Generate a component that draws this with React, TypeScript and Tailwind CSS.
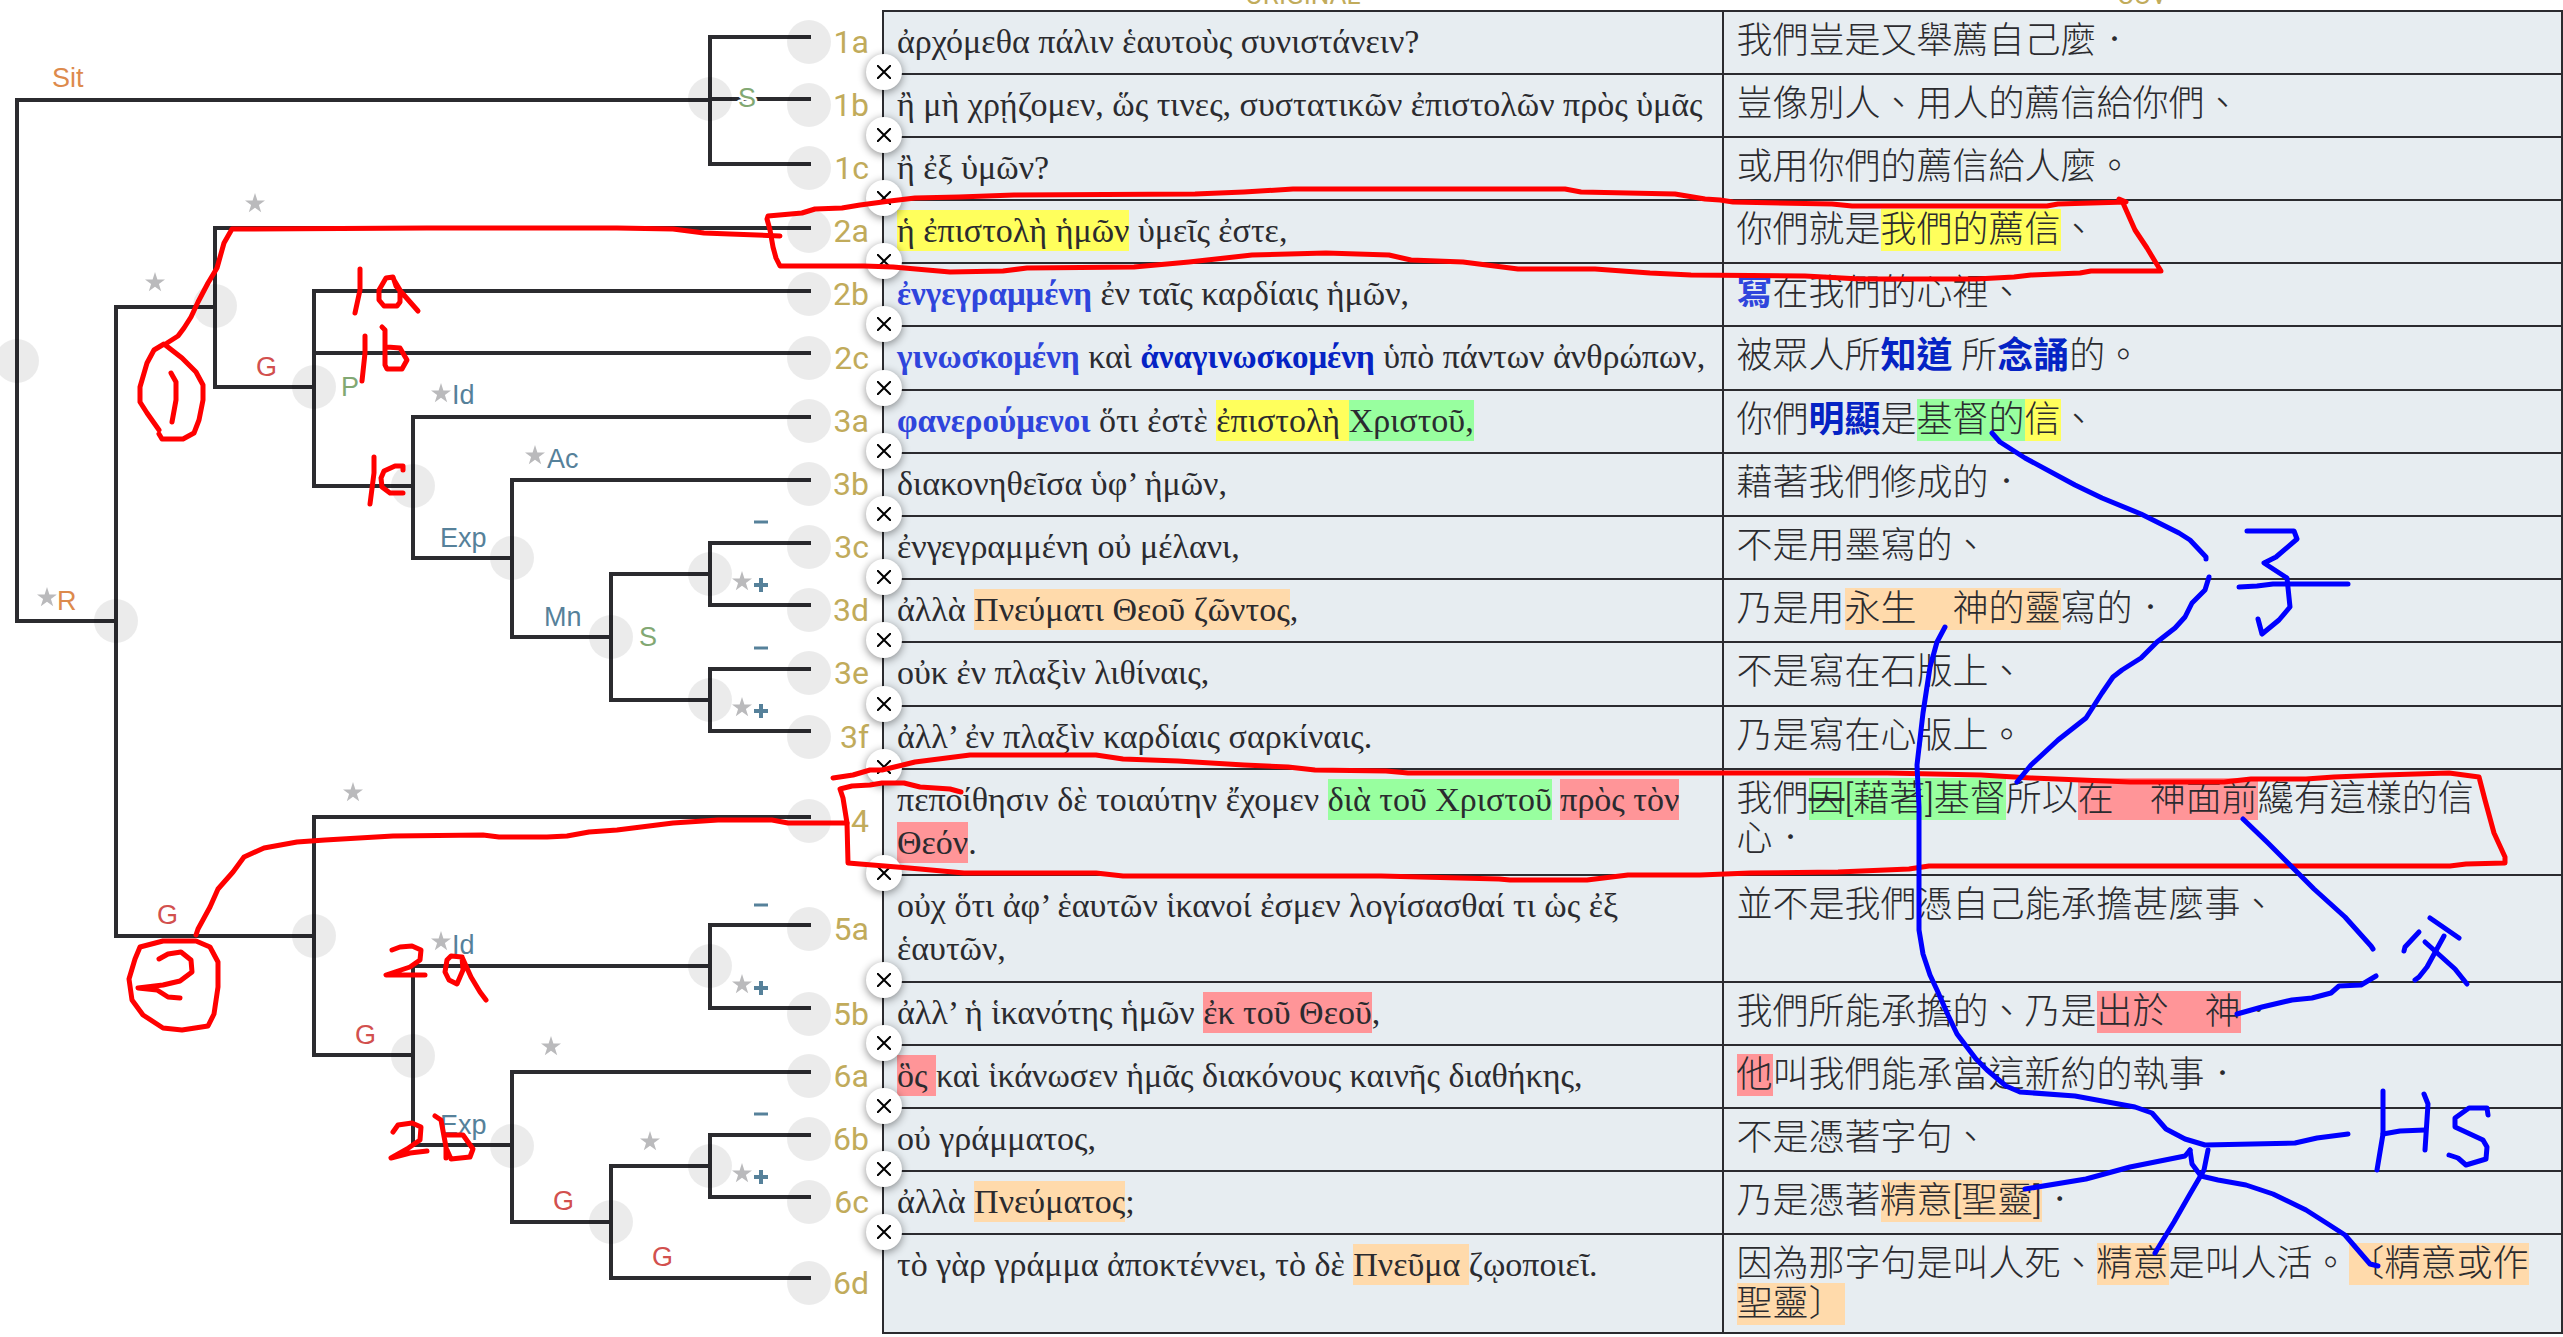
import { Fragment, type ReactNode } from "react";
import clsx from "clsx";

type Tone = "yellow" | "green" | "red" | "orange";

const toneClass: Record<Tone, string> = {
  yellow: "bg-[#ffff5c]",
  green: "bg-[#98ff9f]",
  red: "bg-[#ff9598]",
  orange: "bg-[#ffdaab]",
};

function H({ tone, children }: { tone: Tone; children: ReactNode }) {
  return <mark className={clsx("text-inherit", toneClass[tone])}>{children}</mark>;
}

function B({ deep, children }: { deep?: boolean; children: ReactNode }) {
  return <strong className={clsx("font-bold", deep ? "text-[#0523c4]" : "text-[#2f45dc]")}>{children}</strong>;
}

type Row = { id: string; greek: ReactNode; chinese: ReactNode; height?: string };

const rows: Row[] = [
  { id: "1a", greek: "ἀρχόμεθα πάλιν ἑαυτοὺς συνιστάνειν?", chinese: "我們豈是又舉薦自己麼．" },
  { id: "1b", greek: "ἢ μὴ χρῄζομεν, ὥς τινες, συστατικῶν ἐπιστολῶν πρὸς ὑμᾶς", chinese: "豈像別人、用人的薦信給你們、" },
  { id: "1c", greek: "ἢ ἐξ ὑμῶν?", chinese: "或用你們的薦信給人麼。" },
  {
    id: "2a",
    greek: <><H tone="yellow">ἡ ἐπιστολὴ ἡμῶν</H> ὑμεῖς ἐστε,</>,
    chinese: <>你們就是<H tone="yellow">我們的薦信</H>、</>,
  },
  { id: "2b", greek: <><B>ἐνγεγραμμένη</B> ἐν ταῖς καρδίαις ἡμῶν,</>, chinese: <><B>寫</B>在我們的心裡、</> },
  {
    id: "2c",
    greek: <><B>γινωσκομένη</B> καὶ <B deep>ἀναγινωσκομένη</B> ὑπὸ πάντων ἀνθρώπων,</>,
    chinese: <>被眾人所<B deep>知道</B> 所<B deep>念誦</B>的。</>,
    height: "h-16",
  },
  {
    id: "3a",
    greek: <><B>φανερούμενοι</B> ὅτι ἐστὲ <H tone="yellow">ἐπιστολὴ </H><H tone="green">Χριστοῦ,</H></>,
    chinese: <>你們<B deep>明顯</B>是<H tone="green">基督的</H><H tone="yellow">信</H>、</>,
  },
  { id: "3b", greek: "διακονηθεῖσα ὑφ’ ἡμῶν,", chinese: "藉著我們修成的．" },
  { id: "3c", greek: "ἐνγεγραμμένη οὐ μέλανι,", chinese: "不是用墨寫的、" },
  {
    id: "3d",
    greek: <>ἀλλὰ <H tone="orange">Πνεύματι Θεοῦ ζῶντος</H>,</>,
    chinese: <>乃是用<H tone="orange">永生　神的靈</H>寫的．</>,
  },
  { id: "3e", greek: "οὐκ ἐν πλαξὶν λιθίναις,", chinese: "不是寫在石版上、", height: "h-16" },
  { id: "3f", greek: "ἀλλ’ ἐν πλαξὶν καρδίαις σαρκίναις.", chinese: "乃是寫在心版上。" },
  {
    id: "4",
    greek: <>πεποίθησιν δὲ τοιαύτην ἔχομεν <H tone="green">διὰ τοῦ Χριστοῦ</H> <H tone="red">πρὸς τὸν Θεόν</H>.</>,
    chinese: <>我們<H tone="green"><s>因</s>[藉著]基督</H>所以<H tone="red">在　神面前</H>纔有這樣的信心．</>,
  },
  {
    id: "5a",
    greek: "οὐχ ὅτι ἀφ’ ἑαυτῶν ἱκανοί ἐσμεν λογίσασθαί τι ὡς ἐξ ἑαυτῶν,",
    chinese: "並不是我們憑自己能承擔甚麼事、",
    height: "h-[107px]",
  },
  {
    id: "5b",
    greek: <>ἀλλ’ ἡ ἱκανότης ἡμῶν <H tone="red">ἐκ τοῦ Θεοῦ</H>,</>,
    chinese: <>我們所能承擔的、乃是<H tone="red">出於　神</H>．</>,
  },
  {
    id: "6a",
    greek: <><H tone="red">ὃς </H>καὶ ἱκάνωσεν ἡμᾶς διακόνους καινῆς διαθήκης,</>,
    chinese: <><H tone="red">他</H>叫我們能承當這新約的執事．</>,
  },
  { id: "6b", greek: "οὐ γράμματος,", chinese: "不是憑著字句、" },
  {
    id: "6c",
    greek: <>ἀλλὰ <H tone="orange">Πνεύματος</H>;</>,
    chinese: <>乃是憑著<H tone="orange">精意[聖靈]</H>．</>,
  },
  {
    id: "6d",
    greek: <>τὸ γὰρ γράμμα ἀποκτέννει, τὸ δὲ <H tone="orange">Πνεῦμα </H>ζῳοποιεῖ.</>,
    chinese: <>因為那字句是叫人死、<H tone="orange">精意</H>是叫人活。<H tone="orange">〔精意或作聖靈〕</H></>,
  },
];

/* Tree geometry: verticals are [x, y1, y2], horizontals are [x1, x2, y]. */
const verticals = [
  [17, 100, 621], [116, 307, 936], [215, 228, 387], [314, 291, 486], [314, 817, 1055],
  [413, 417, 558], [413, 966, 1145], [512, 480, 637], [512, 1072, 1222], [611, 574, 700],
  [611, 1166, 1278], [710, 37, 164], [710, 543, 605], [710, 669, 731], [710, 925, 1008], [710, 1135, 1197],
];
const horizontals = [
  [17, 710, 100], [17, 116, 621], [116, 215, 307], [116, 314, 936], [215, 314, 387], [314, 413, 486],
  [314, 413, 1055], [413, 512, 558], [413, 710, 966], [413, 512, 1145], [512, 611, 637], [512, 611, 1222],
  [611, 710, 574], [611, 710, 700], [611, 710, 1166],
];
const joints = [
  [17, 361], [116, 621], [215, 306], [314, 387], [314, 936], [413, 486], [413, 1056], [512, 558], [512, 1146],
  [611, 637], [611, 1222], [710, 99], [710, 574], [710, 700], [710, 966], [710, 1166],
];
/* [label, x where the branch starts, branch y, node y] */
const leaves: [string, number, number, number][] = [
  ["1a", 710, 37, 42], ["1b", 710, 99, 105], ["1c", 710, 164, 168], ["2a", 215, 228, 231], ["2b", 314, 291, 294],
  ["2c", 314, 353, 358], ["3a", 413, 417, 421], ["3b", 512, 480, 484], ["3c", 710, 543, 547], ["3d", 710, 605, 610],
  ["3e", 710, 669, 673], ["3f", 710, 731, 737], ["4", 314, 817, 821], ["5a", 710, 925, 929], ["5b", 710, 1008, 1014],
  ["6a", 512, 1072, 1076], ["6b", 710, 1135, 1139], ["6c", 710, 1197, 1202], ["6d", 611, 1278, 1283],
];
const stars = [
  [255, 203], [155, 282], [441, 393], [535, 455], [47, 597], [742, 581], [742, 707], [353, 792],
  [441, 941], [742, 984], [551, 1046], [650, 1141], [742, 1173],
];
const tags: [string, number, number, string][] = [
  ["Sit", 52, 87, "fill-[#dd8a4c]"], ["R", 57, 610, "fill-[#dd8a4c]"],
  ["G", 256, 376, "fill-[#d2504e]"], ["G", 157, 924, "fill-[#d2504e]"], ["G", 355, 1044, "fill-[#d2504e]"],
  ["G", 553, 1210, "fill-[#d2504e]"], ["G", 652, 1266, "fill-[#d2504e]"],
  ["P", 341, 396, "fill-[#82a873]"], ["S", 738, 107, "fill-[#82a873]"], ["S", 639, 646, "fill-[#82a873]"],
  ["Id", 452, 404, "fill-[#56819a]"], ["Ac", 547, 468, "fill-[#56819a]"], ["Exp", 440, 547, "fill-[#56819a]"],
  ["Mn", 544, 626, "fill-[#56819a]"], ["Id", 452, 954, "fill-[#56819a]"], ["Exp", 440, 1134, "fill-[#56819a]"],
];
const minuses = [522, 648, 905, 1114];
const pluses = [585, 711, 988, 1177];

function Tree() {
  return (
    <svg className="h-[1337px] w-[882px] shrink-0" viewBox="0 0 882 1337" role="img" aria-label="Discourse tree">
      <g className="fill-none stroke-[#2b2b2f] stroke-4" strokeLinecap="square">
        {verticals.map(([x, a, b]) => <path key={`${x}-${a}`} d={`M${x} ${a}V${b}`} />)}
        {horizontals.map(([a, b, y]) => <path key={`${a}-${y}`} d={`M${a} ${y}H${b}`} />)}
        {leaves.map(([id, x, y]) => <path key={id} d={`M${x} ${y}H809`} />)}
      </g>
      <g className="fill-black/8">
        {joints.map(([x, y]) => <circle key={`${x}-${y}`} cx={x} cy={y} r="22" />)}
        {leaves.map(([id, , , y]) => <circle key={id} cx="809" cy={y} r="22" />)}
      </g>
      <g className="fill-[#bababc]">
        {stars.map(([x, y]) => (
          <path
            key={`${x}-${y}`}
            transform={`translate(${x} ${y})`}
            d="M0-10 2.4-2.6H10L3.9 1.9 6.2 9.2 0 4.8-6.2 9.2-3.9 1.9-10-2.6H-2.4Z"
          />
        ))}
      </g>
      <g
        className="stroke-white stroke-[5] font-['Liberation_Sans',sans-serif] text-[27px] [paint-order:stroke]"
        strokeLinejoin="round"
      >
        {tags.map(([t, x, y, c]) => (
          <text key={`${t}-${x}-${y}`} x={x} y={y} className={c}>{t}</text>
        ))}
      </g>
      <g className="fill-none stroke-[#56819a] stroke-3">
        {minuses.map((y) => <path key={y} d={`M754 ${y}H768`} />)}
        {pluses.map((y) => <path key={y} className="stroke-4" d={`M754 ${y}H768M761 ${y - 7}V${y + 7}`} />)}
      </g>
      <g className="fill-[#c1ab5b] text-[32px]" textAnchor="end">
        {leaves.map(([id, , , y]) => <text key={id} x="869" y={y + 11}>{id}</text>)}
      </g>
    </svg>
  );
}

function CloseButton({ id }: { id: string }) {
  return (
    <button
      type="button"
      aria-label={`Split after ${id}`}
      className="absolute -bottom-[17px] -left-[18px] z-10 flex size-9 items-center justify-center rounded-full bg-white shadow-[0_2px_8px_rgba(0,0,0,0.45)]"
    >
      <svg viewBox="0 0 14 14" className="size-[14px] fill-none stroke-black stroke-2">
        <path d="M0 0 14 14M14 0 0 14" />
      </svg>
    </button>
  );
}

function VerseTable() {
  return (
    <table className="w-full table-fixed border-collapse text-[#2b2b2f]">
      <thead>
        <tr className="text-[26px] leading-[26px] text-[#c1ab5b]">
          {["ORIGINAL", "CUV"].map((t) => (
            <th key={t} className="p-0 font-normal">
              <div className="flex h-[10px] items-end justify-center pb-0.5"><span>{t}</span></div>
            </th>
          ))}
        </tr>
      </thead>
      <tbody>
        {rows.map((r, i) => (
          <tr key={r.id} className={clsx("bg-[#e7edf1]", r.height ?? "h-[63px]")}>
            <td className="relative border-2 border-[#2b2b2f] pt-2 pb-[10px] pr-0 pl-[13px] align-top font-['Liberation_Serif',serif] text-[34px] leading-[43px] [&_mark]:py-0.5 [&_strong]:text-[33px] [&_strong]:leading-10">
              {r.greek}
              {i < rows.length - 1 && <CloseButton id={r.id} />}
            </td>
            <td className="border-2 border-[#2b2b2f] pt-[9px] pr-5 pb-2 pl-[13px] align-top font-['Roboto','Noto_Sans_CJK_TC',sans-serif] text-[36px] leading-10 font-light [text-spacing-trim:space-all]">
              {r.chinese}
            </td>
          </tr>
        ))}
      </tbody>
    </table>
  );
}

const redInk = [
  "780,236 730,234 704,233 673,229 617,228 427,228 253,229 232,229 224,243 217,268 208,283 198,302 191,317 184,328 178,336 167,343",
  "159,430 147,413 140,402 140,387 147,363 154,350 164,344 182,358 196,372 203,385 203,400 199,420 194,433 183,439 162,439 159,434",
  "171,373 176,382 176,400 172,422",
  "360,269 360,290 355,313",
  "396,286 393,277 386,278 379,290 379,300 384,306 397,306 400,302 400,290 394,280 396,286 418,311",
  "365,336 365,353 362,381",
  "382,327 385,330 385,347 385,365 387,369 402,369 407,360 400,348 387,347",
  "374,457 374,473 370,504",
  "403,470 403,466 395,466 384,471 381,478 382,487 390,493 403,493",
  "2119,199 2126,202 2058,204 2047,206 1852,206 1832,204 1733,202 1720,200 1705,199 1675,194 1581,192 1565,189 1293,189 1244,192 1195,194 1014,195 959,197 915,198 890,201 860,205 842,208 815,209 802,213 768,216 767,219 770,230 773,247 776,258 780,266 864,266 893,267 950,272 1003,271 1027,268 1134,267 1189,262 1252,255 1326,253 1389,255 1411,260 1463,262 1518,269 1595,269 1650,273 1691,275 1805,276 1860,279 1976,279 2014,277 2031,275 2080,273 2091,271 2161,271 2156,263 2147,248 2135,230 2123,203",
  "847,823 788,823 772,820 718,820 673,823 617,830 589,832 567,836 547,837 499,837 483,835 393,836 325,840 297,842 264,848 244,857 233,872 218,889 210,907 198,929 196,935",
  "182,941 163,941 140,947 135,959 129,979 132,1000 143,1015 163,1028 182,1030 208,1026 214,1014 218,987 218,962 210,947 196,941 182,941",
  "159,959 168,954 181,952 191,960 192,972 180,981 163,985 138,988 157,990 168,997 180,998",
  "392,950 400,947 412,946 421,950 420,960 410,967 386,975 425,975",
  "462,957 451,956 447,960 445,972 449,980 457,984 463,970 462,957 471,977 480,992 486,1000",
  "393,1132 398,1125 412,1123 421,1127 420,1140 407,1149 391,1158 410,1153 427,1151",
  "435,1116 441,1120 446,1147 446,1158",
  "447,1135 463,1135 473,1149 470,1157 451,1159 447,1150",
  "833,778 853,775 870,770 882,770 915,762 970,755 1096,755 1123,759 1178,761 1244,765 1288,767 1315,770 1386,771 1408,773 1887,773 1981,775 2031,778 2130,782 2224,782 2251,779 2306,779 2334,777 2383,775 2449,773 2479,777 2485,800 2494,833 2505,857 2505,863 2466,864 2450,866 1929,866 1909,869 1838,872 1750,873 1700,875 1628,875 1587,880 1510,880 1499,879 1381,876 1123,876 1096,873 964,873 909,868 860,864 848,863 847,823 843,798 840,789 852,786 870,785 882,783 904,783 920,787 950,789 961,792",
];
const blueInk = [
  "1992,433 2000,442 2025,458 2075,485 2102,498 2141,514 2179,533 2190,540 2206,557 2206,559",
  "2209,577 2205,590 2192,603 2185,617 2175,628 2157,642 2141,658 2122,670 2113,677 2102,693 2086,718 2058,740 2031,765 2017,782",
  "2247,531 2294,531 2297,539 2276,557 2264,563 2287,578 2290,607 2279,620 2262,634 2258,619",
  "2239,587 2257,586 2273,584 2348,584",
  "1945,627 1937,642 1930,667 1923,713 1917,765 1919,807 1919,930 1923,954 1930,975 1937,990 1948,1015 1957,1034 1976,1059 1987,1070 2006,1086 2020,1092 2075,1096 2135,1107 2152,1113 2166,1129 2185,1139 2205,1145 2295,1143 2317,1138 2348,1134",
  "2243,819 2268,843 2314,889 2345,917 2371,946 2373,949",
  "2237,1014 2262,1007 2292,1000 2312,998 2331,993 2339,986 2361,985 2376,976",
  "2419,932 2405,947 2404,951",
  "2430,918 2459,938",
  "2444,936 2427,967 2419,977 2415,980",
  "2425,942 2455,969 2467,984",
  "2383,1091 2383,1134 2377,1170",
  "2424,1094 2428,1104 2425,1150",
  "2383,1134 2400,1131 2425,1130",
  "2488,1115 2487,1108 2469,1108 2455,1118 2455,1127 2483,1140 2487,1147 2486,1159 2466,1165 2458,1158 2449,1155",
  "2025,1189 2086,1179 2130,1167 2185,1156 2190,1150",
  "2190,1150 2192,1164 2201,1176 2218,1180 2246,1185 2273,1194 2306,1210 2328,1224 2345,1235 2370,1264 2378,1266",
  "2208,1150 2204,1170 2190,1194 2174,1222 2155,1253",
];

function Ink() {
  return (
    <svg
      className="pointer-events-none absolute top-0 left-0 z-20 h-[1337px] w-full fill-none stroke-[5]"
      viewBox="0 0 2563 1337"
      preserveAspectRatio="none"
      strokeLinecap="round"
      strokeLinejoin="round"
      aria-hidden="true"
    >
      <g className="stroke-[#ff0000]">
        {redInk.map((p) => <Fragment key={p}><polyline points={p} /></Fragment>)}
      </g>
      <g className="stroke-[#0000ff]">
        {blueInk.map((p) => <Fragment key={p}><polyline points={p} /></Fragment>)}
      </g>
    </svg>
  );
}

export default function App() {
  return (
    <main className="relative flex items-start overflow-hidden bg-white font-['Roboto',sans-serif]">
      <Tree />
      <div className="min-w-0 flex-1">
        <VerseTable />
      </div>
      <Ink />
    </main>
  );
}
